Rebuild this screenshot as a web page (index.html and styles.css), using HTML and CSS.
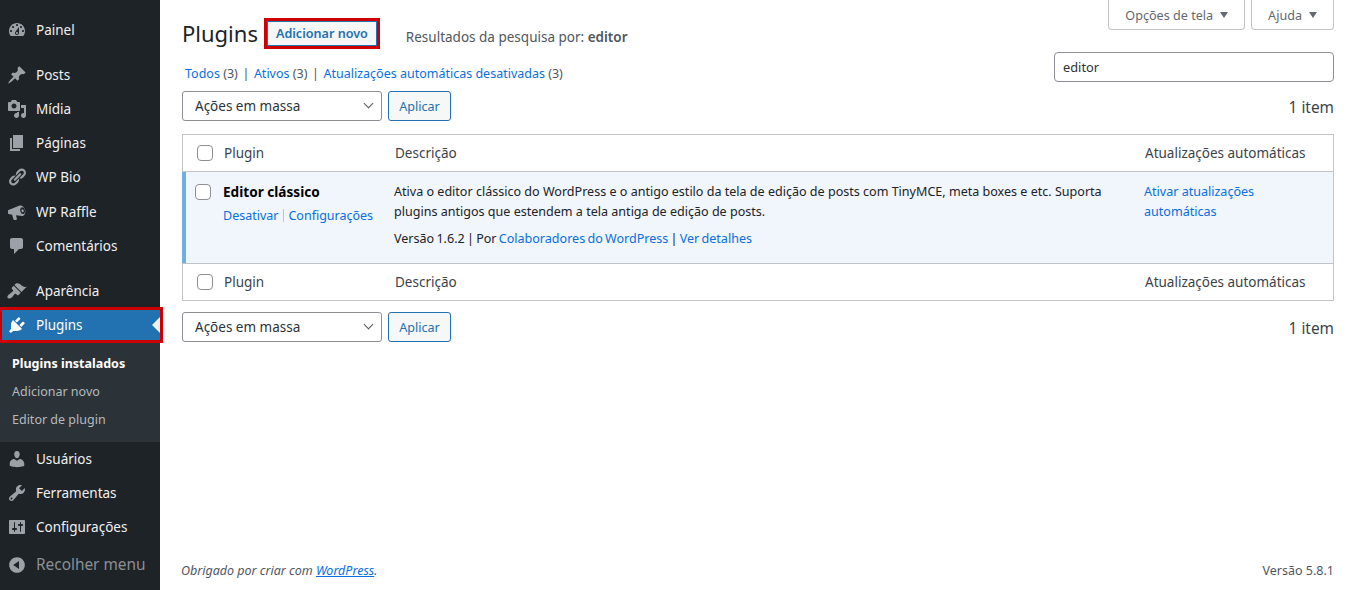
FILE: index.html
```html
<!DOCTYPE html>
<html lang="pt-BR">

<head>
    <meta charset="UTF-8" />
    <title>Plugins</title>
    <link rel="stylesheet" href="styles.css">
</head>

<body>
    <div class="layout">
        <nav class="sidebar">
            <ul class="menu">
                <li class="menu-item"><svg class="icon" viewBox="0 0 20 20"><path fill-rule="evenodd" d="M3.76 16h12.48c1.1-1.37 1.76-3.11 1.76-5 0-4.42-3.58-8-8-8s-8 3.58-8 8c0 1.89.66 3.63 1.76 5zM10 4c.55 0 1 .45 1 1s-.45 1-1 1-1-.45-1-1 .45-1 1-1zM6 6c.55 0 1 .45 1 1s-.45 1-1 1-1-.45-1-1 .45-1 1-1zm8 0c.55 0 1 .45 1 1s-.45 1-1 1-1-.45-1-1 .45-1 1-1zm-5.37 5.55L12 7v6c0 1.1-.9 2-2 2s-2-.9-2-2c0-.57.24-1.08.63-1.45zM4 10c.55 0 1 .45 1 1s-.45 1-1 1-1-.45-1-1 .45-1 1-1zm12 0c.55 0 1 .45 1 1s-.45 1-1 1-1-.45-1-1 .45-1 1-1zm-5 3c0-.55-.45-1-1-1s-1 .45-1 1 .45 1 1 1 1-.45 1-1z"/></svg>Painel</li>
                <li class="menu-item sep"><svg class="icon" viewBox="0 0 20 20"><path d="M10.44 3.02l1.82-1.82 6.36 6.35-1.83 1.82c-1.05-.68-2.48-.57-3.41.36l-.75.75c-.92.93-1.04 2.35-.35 3.41l-1.83 1.82-2.41-2.41-2.8 2.79c-.42.42-3.38 2.71-3.8 2.29s1.86-3.39 2.28-3.81l2.79-2.79L4.1 9.36l1.83-1.82c1.05.69 2.48.57 3.4-.36l.75-.75c.93-.92 1.05-2.35.36-3.41z"/></svg>Posts</li>
                <li class="menu-item"><svg class="icon" viewBox="0 0 20 20"><path fill-rule="evenodd" d="M13 11V4c0-.55-.45-1-1-1h-1.67L9 1H5L3.67 3H2c-.55 0-1 .45-1 1v7c0 .55.45 1 1 1h10c.55 0 1-.45 1-1zM7 4.5c1.38 0 2.5 1.12 2.5 2.5S8.38 9.5 7 9.5 4.5 8.38 4.5 7 5.62 4.5 7 4.5zM14 6h5v10.5c0 1.38-1.12 2.5-2.5 2.5S14 17.88 14 16.5s1.12-2.5 2.5-2.5c.17 0 .34.02.5.05V9h-3V6zm-4 8.05V13h2v3.5c0 1.38-1.12 2.5-2.5 2.5S7 17.88 7 16.5 8.12 14 9.5 14c.17 0 .34.02.5.05z"/></svg>Mídia</li>
                <li class="menu-item"><svg class="icon" viewBox="0 0 20 20"><path d="M6 15V2h10v13H6zm-1 1h8v2H3V5h2v11z"/></svg>Páginas</li>
                <li class="menu-item"><svg class="icon" viewBox="0 0 20 20"><path d="M17.74 2.76c1.68 1.69 1.68 4.41 0 6.1l-1.53 1.52c-1.12 1.12-2.7 1.47-4.14 1.09l2.62-2.61.76-.77.76-.76c.84-.84.84-2.2 0-3.04-.84-.85-2.2-.85-3.04 0l-.77.76-3.38 3.38c-.37-1.44-.02-3.02 1.1-4.14l1.52-1.53c1.69-1.68 4.42-1.68 6.1 0zM8.59 13.43l5.34-5.34c.42-.42.42-1.1 0-1.52-.44-.43-1.13-.39-1.53 0l-5.33 5.34c-.42.42-.42 1.1 0 1.52.44.43 1.13.39 1.52 0zm-.76 2.29l4.14-4.15c.38 1.44.03 3.02-1.09 4.14l-1.52 1.53c-1.69 1.68-4.41 1.68-6.1 0-1.68-1.68-1.68-4.42 0-6.1l1.53-1.52c1.12-1.12 2.7-1.47 4.14-1.1l-4.14 4.15c-.85.84-.85 2.2 0 3.05.84.84 2.2.84 3.04 0z"/></svg>WP Bio</li>
                <li class="menu-item"><svg class="icon" viewBox="0 0 20 20"><path fill-rule="evenodd" d="M1 8.2 12.6 3.6c1.8-.7 4.9 1.2 5.6 4.6.6 3.3-1 5.6-3 5.9l-6.2-.9.9 3.6c.1.6-.3 1.2-.9 1.2H7.4c-.5 0-.9-.3-1-.8L5.2 12.7 1.6 12c-.4-.1-.6-.4-.6-.8zM15 5.2c-1.4.2-2.1 1.9-1.7 3.9.4 1.9 1.6 3.2 2.9 3 1.4-.2 2.1-1.9 1.7-3.9-.4-1.9-1.6-3.2-2.9-3zm.3 2c.7-.1 1.2.5 1.4 1.3.2.9-.2 1.6-.8 1.7-.6.1-1.2-.5-1.4-1.3-.2-.9.2-1.6.8-1.7z"/></svg>WP Raffle</li>
                <li class="menu-item"><svg class="icon" viewBox="0 0 20 20"><path d="M5 2h9c1.1 0 2 .9 2 2v7c0 1.1-.9 2-2 2h-2l-5 5v-5H5c-1.1 0-2-.9-2-2V4c0-1.1.9-2 2-2z"/></svg>Comentários</li>
                <li class="menu-item sep"><svg class="icon" viewBox="0 0 20 20"><path d="M14.48 11.06L7.41 3.99l1.5-1.5c.5-.56 2.3-.47 3.51.32 1.21.8 1.43 1.28 2.91 2.1 1.18.64 2.45 1.26 4.45.85zm-.71.71L6.7 4.7 4.93 6.47c-.39.39-.39 1.02 0 1.41l1.06 1.06c.39.39.39 1.03 0 1.42-.6.6-1.43 1.11-2.21 1.69-.35.26-.7.53-1.01.84C1.43 13.23.4 14.85.4 15.9c0 .46.19.88.5 1.19.31.31.72.51 1.19.51 1.05 0 2.66-1.03 3.02-1.4.31-.31.58-.66.84-1.01.58-.78 1.09-1.61 1.69-2.21.39-.39 1.03-.39 1.42 0l1.06 1.06c.39.39 1.02.39 1.41 0z"/></svg>Aparência</li>
                <li class="menu-item current"><svg class="icon" viewBox="0 0 20 20"><path d="M13.11 4.36L9.87 7.6 8 5.73l3.24-3.24c.35-.34 1.05-.2 1.56.32.52.51.66 1.21.31 1.55zm-8 1.77l.91-1.12 9.01 9.01-1.19.84c-.71.71-2.63 1.16-3.82 1.16H6.14L4.9 17.26c-.59.59-1.54.59-2.12 0-.59-.58-.59-1.53 0-2.12l1.24-1.24v-3.88c0-1.13.4-3.19 1.09-3.89zm7.26 3.97l3.24-3.24c.34-.35 1.04-.21 1.55.31.52.51.66 1.21.31 1.55l-3.24 3.25z"/></svg>Plugins</li>
                <li>
                    <ul class="submenu">
                        <li class="sub-item strong">Plugins instalados</li>
                        <li class="sub-item">Adicionar novo</li>
                        <li class="sub-item">Editor de plugin</li>
                    </ul>
                </li>
                <li class="menu-item"><svg class="icon" viewBox="0 0 20 20"><path d="M10 9.25c-2.27 0-2.73-3.44-2.73-3.44C7 4.02 7.82 2 9.97 2c2.16 0 2.98 2.02 2.71 3.81 0 0-.41 3.44-2.68 3.44zm0 2.57L12.72 10c2.39 0 4.52 2.33 4.52 4.53v2.49s-3.65 1.13-7.24 1.13c-3.65 0-7.24-1.13-7.24-1.13v-2.49c0-2.25 1.94-4.48 4.47-4.48z"/></svg>Usuários</li>
                <li class="menu-item"><svg class="icon" viewBox="0 0 20 20"><path fill-rule="evenodd" d="M16.68 9.77c-1.34 1.34-3.3 1.67-4.95.99l-5.41 6.52c-.99.99-2.59.99-3.58 0s-.99-2.59 0-3.57l6.52-5.42c-.68-1.65-.35-3.61.99-4.95 1.28-1.28 3.12-1.62 4.72-1.06l-2.89 2.89 2.82 2.82 2.86-2.87c.53 1.58.18 3.39-1.08 4.65zM3.81 16.21c.4.39 1.04.39 1.43 0 .4-.4.4-1.04 0-1.43-.39-.4-1.03-.4-1.43 0-.39.39-.39 1.03 0 1.43z"/></svg>Ferramentas</li>
                <li class="menu-item"><svg class="icon" viewBox="0 0 20 20"><path fill-rule="evenodd" d="M18 16V4c0-.55-.45-1-1-1H3c-.55 0-1 .45-1 1v12c0 .55.45 1 1 1h14c.55 0 1-.45 1-1zM8 11h1c.55 0 1 .45 1 1s-.45 1-1 1H8v1.5c0 .28-.22.5-.5.5s-.5-.22-.5-.5V13H6c-.55 0-1-.45-1-1s.45-1 1-1h1V5.5c0-.28.22-.5.5-.5s.5.22.5.5V11zm5-2h-1c-.55 0-1-.45-1-1s.45-1 1-1h1V5.5c0-.28.22-.5.5-.5s.5.22.5.5V7h1c.55 0 1 .45 1 1s-.45 1-1 1h-1v5.5c0 .28-.22.5-.5.5s-.5-.22-.5-.5V9z"/></svg>Configurações</li>
                <li class="menu-item collapse"><svg class="icon" viewBox="0 0 20 20"><path fill-rule="evenodd" d="M10 2.16c4.33 0 7.84 3.51 7.84 7.84s-3.51 7.84-7.84 7.84S2.16 14.33 2.16 10 5.71 2.16 10 2.16zm2 11.72V6.12L6.18 9.97z"/></svg>Recolher menu</li>
            </ul>
        </nav>

        <div class="main">
            <div class="screen-meta">
                <button class="meta-btn">Opções de tela<span class="caret"></span></button>
                <button class="meta-btn">Ajuda<span class="caret"></span></button>
            </div>

            <div class="wrap">
                <div class="title-row">
                    <h1>Plugins</h1>
                    <a class="add-new">Adicionar novo</a>
                    <span class="search-note">Resultados da pesquisa por: <strong>editor</strong></span>
                </div>

                <div class="filter-row">
                    <ul class="filters">
                        <li><a>Todos</a> (3)</li>
                        <li class="bar">|</li>
                        <li><a>Ativos</a> (3)</li>
                        <li class="bar">|</li>
                        <li><a>Atualizações automáticas desativadas</a> (3)</li>
                    </ul>
                    <input class="search" type="text" value="editor">
                </div>

                <div class="tablenav">
                    <div class="select-box">
                        <select class="bulk"><option>Ações em massa</option></select>
                        <span class="chevron"></span>
                    </div>
                    <button class="apply">Aplicar</button>
                    <span class="count">1 item</span>
                </div>

                <div class="plugins">
                    <div class="row head">
                        <div class="col-cb"><input class="check" type="checkbox"></div>
                        <div class="col-name">Plugin</div>
                        <div class="col-desc">Descrição</div>
                        <div class="col-auto">Atualizações automáticas</div>
                    </div>
                    <div class="row active">
                        <div class="col-cb"><input class="check" type="checkbox"></div>
                        <div class="col-name">
                            <div class="plugin-title">Editor clássico</div>
                            <div class="row-actions"><a>Desativar</a><span class="tick"></span><a>Configurações</a></div>
                        </div>
                        <div class="col-desc">
                            <p class="desc-text">Ativa o editor clássico do WordPress e o antigo estilo da tela de edição de posts com TinyMCE, meta boxes e etc. Suporta plugins antigos que estendem a tela antiga de edição de posts.</p>
                            <p class="desc-meta">Versão 1.6.2 | Por <a>Colaboradores do WordPress</a> | <a>Ver detalhes</a></p>
                        </div>
                        <div class="col-auto"><a>Ativar atualizações automáticas</a></div>
                    </div>
                    <div class="row foot">
                        <div class="col-cb"><input class="check" type="checkbox"></div>
                        <div class="col-name">Plugin</div>
                        <div class="col-desc">Descrição</div>
                        <div class="col-auto">Atualizações automáticas</div>
                    </div>
                </div>

                <div class="tablenav bottom">
                    <div class="select-box">
                        <select class="bulk"><option>Ações em massa</option></select>
                        <span class="chevron"></span>
                    </div>
                    <button class="apply">Aplicar</button>
                    <span class="count">1 item</span>
                </div>
            </div>

            <footer class="footer">
                <span class="thanks">Obrigado por criar com <a>WordPress</a>.</span>
                <span class="version">Versão 5.8.1</span>
            </footer>
        </div>
    </div>
</body>

</html>
```

FILE: styles.css
```css
* {
    box-sizing: border-box;
}

html,
body {
    margin: 0;
    height: 100%;
}

body {
    font-family: "Noto Sans", sans-serif;
    font-size: 12.5px;
    color: #3c434a;
    background: #fff;
    overflow: hidden;
}

ul {
    list-style: none;
    margin: 0;
    padding: 0;
}

a {
    color: #0a6fe0;
}

.layout {
    display: flex;
    height: 590px;
}

/* sidebar */
.sidebar {
    width: 160px;
    flex: none;
    background: #1d2327;
    padding-top: 12.5px;
}

.menu-item {
    display: flex;
    align-items: center;
    height: 34.2px;
    padding-left: 7px;
    font-size: 13.5px;
    color: #f0f0f1;
    position: relative;
}

.menu-item.sep {
    margin-top: 11px;
}

.icon {
    width: 20px;
    height: 20px;
    margin-right: 9px;
    fill: #9ca1a7;
    flex: none;
}

.current {
    background: #2271b1;
    color: #fff;
}

.current .icon {
    fill: #fff;
}

.current::before {
    content: "";
    position: absolute;
    left: 0;
    right: -3px;
    top: -1px;
    bottom: -1px;
    border: 3px solid #c00;
    border-left-width: 2px;
}

.current::after {
    content: "";
    position: absolute;
    right: 0;
    top: 50%;
    margin-top: -8px;
    border: 8px solid transparent;
    border-right-color: #f0f0f1;
    border-left: 0;
}

.submenu {
    background: #2c3338;
    padding: 8px 0 7.4px;
}

.sub-item {
    height: 28px;
    line-height: 28px;
    padding-left: 12px;
    font-size: 12.5px;
    color: #b4b9be;
}

.sub-item.strong {
    color: #fff;
    font-weight: 700;
}

.collapse {
    margin-top: 2.6px;
    font-size: 15.4px;
    color: #8c8f94;
    height: 36px;
}

/* main */
.main {
    flex: 1;
    display: flex;
    flex-direction: column;
    min-width: 0;
}

.screen-meta {
    display: flex;
    justify-content: flex-end;
    gap: 6px;
    padding-right: 20px;
    height: 30px;
}

.meta-btn {
    font-family: inherit;
    font-size: 12.6px;
    color: #646970;
    background: #fff;
    border: 1px solid #c3c4c7;
    border-top: 0;
    border-radius: 0 0 4px 4px;
    padding: 1px 16px 0;
}

.caret {
    display: inline-block;
    margin-left: 7px;
    border: 4.5px solid transparent;
    border-top: 6px solid #646970;
    border-bottom: 0;
    vertical-align: 2px;
}

.wrap {
    flex: 1;
    padding: 0 20px 0 22px;
}

.title-row {
    display: flex;
    align-items: center;
    height: 19px;
    margin-top: -6px;
}

h1 {
    font-size: 22px;
    font-weight: 400;
    color: #1d2327;
    margin: -2px 6px 0 0;
    line-height: 1;
}

.add-new {
    display: block;
    font-size: 12.6px;
    font-weight: 600;
    color: #2271b1;
    background: #f6f7f7;
    border: 3px solid #c00;
    box-shadow: inset 0 0 0 1px #2271b1;
    padding: 0 9px;
    line-height: 25px;
    height: 31px;
}

.search-note {
    margin-left: 26px;
    margin-top: 6px;
    font-size: 13.5px;
    color: #50575e;
}

.search-note strong {
    font-weight: 600;
}

.filter-row {
    display: flex;
    justify-content: space-between;
    align-items: flex-end;
    margin-top: 9px;
}

.filters {
    display: flex;
    gap: 4.6px;
    padding-left: 3px;
    font-size: 12.5px;
    color: #50575e;
}

.search {
    width: 280px;
    height: 30px;
    font-family: inherit;
    font-size: 12.8px;
    color: #2c3338;
    border: 1px solid #8c8f94;
    border-radius: 4px;
    padding: 0 8px;
}

.tablenav {
    display: flex;
    align-items: center;
    height: 30px;
    margin-top: 9px;
    margin-bottom: 13px;
}

.tablenav.bottom {
    margin-top: 11px;
}

.select-box {
    position: relative;
    width: 200px;
    height: 30px;
    margin-right: 6px;
}

.bulk {
    appearance: none;
    width: 100%;
    height: 100%;
    font-family: inherit;
    font-size: 13.5px;
    color: #2c3338;
    background: #fff;
    border: 1px solid #8c8f94;
    border-radius: 3px;
    padding: 0 24px 0 12px;
}

.chevron {
    position: absolute;
    right: 10px;
    top: 9px;
    width: 7px;
    height: 7px;
    border-right: 1.5px solid #50575e;
    border-bottom: 1.5px solid #50575e;
    transform: rotate(45deg);
}

.apply {
    height: 30px;
    width: 63px;
    font-family: inherit;
    font-size: 12.6px;
    color: #2271b1;
    background: #f6f7f7;
    border: 1px solid #2271b1;
    border-radius: 3px;
    padding: 0;
}

.count {
    margin-left: auto;
    margin-top: 2px;
    font-size: 15.4px;
    color: #3c434a;
}

/* table */
.plugins {
    border: 1px solid #c3c4c7;
}

.row {
    display: flex;
}

.head {
    height: 37px;
    align-items: center;
    border-bottom: 1px solid #c3c4c7;
    font-size: 13.5px;
}

.foot {
    height: 37px;
    align-items: center;
    border-top: 1px solid #c3c4c7;
    font-size: 13.5px;
}

.col-cb {
    width: 41px;
    flex: none;
    padding-left: 14px;
    display: flex;
    align-items: center;
}

.col-name {
    width: 171px;
    flex: none;
}

.col-desc {
    flex: 1;
    min-width: 0;
}

.col-auto {
    width: 188px;
    flex: none;
}

.check {
    appearance: none;
    width: 16px;
    height: 16px;
    margin: 0;
    background: #fff;
    border: 1px solid #8c8f94;
    border-radius: 4px;
}

.active {
    background: #f0f6fc;
    height: 91px;
    margin-left: -1px;
    border-left: 4px solid #72aee6;
    color: #1d2327;
    padding-top: 10px;
}

.active .col-cb {
    width: 37px;
    padding-left: 9px;
    align-items: flex-start;
    padding-top: 2px;
}

.plugin-title {
    font-size: 13.6px;
    font-weight: 700;
    color: #000;
    line-height: 20px;
}

.row-actions {
    margin-top: 5px;
    font-size: 12.5px;
    display: flex;
    align-items: center;
}

.tick {
    width: 1px;
    height: 13px;
    background: #c3c4c7;
    margin: 0 4.5px;
}

.desc-text {
    margin: 0;
    font-size: 12.55px;
    line-height: 20px;
    padding-right: 20px;
}

.desc-meta {
    margin: 7px 0 0;
    font-size: 12.55px;
    line-height: 20px;
    word-spacing: -1px;
}

.active .col-auto {
    width: 189px;
    font-size: 12.55px;
    line-height: 20px;
    padding-right: 60px;
}

/* footer */
.footer {
    display: flex;
    justify-content: space-between;
    padding: 0 20px 11px 21px;
    font-size: 12.5px;
    color: #50575e;
}

.thanks {
    font-style: italic;
}

.thanks a {
    text-decoration: underline;
}
```
